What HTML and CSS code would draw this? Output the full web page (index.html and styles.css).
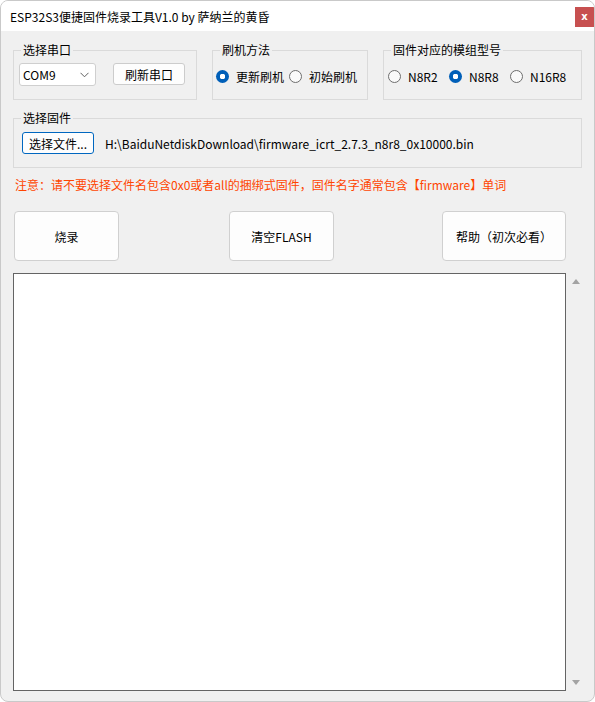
FILE: index.html
```html
<!DOCTYPE html>
<html lang="zh-CN">
<head>
<meta charset="utf-8">
<title>ESP32S3便捷固件烧录工具</title>
<link rel="stylesheet" href="styles.css">
</head>
<body>
<div class="window">
  <div class="titlebar">
    <span class="title">ESP32S3便捷固件烧录工具V1.0 by 萨纳兰的黄昏</span>
    <span class="close">x</span>
  </div>
  <div class="content">
    <div class="row-groups">
      <div class="group g-port">
        <span class="group-title">选择串口</span>
        <div class="group-body">
          <div class="combo">
            <span>COM9</span>
            <svg class="chev" width="9" height="6" viewBox="0 0 9 6"><polyline points="0.5,0.8 4.5,4.8 8.5,0.8" fill="none" stroke="#606060" stroke-width="1"/></svg>
          </div>
          <div class="btn btn-refresh">刷新串口</div>
        </div>
      </div>
      <div class="group g-method">
        <span class="group-title">刷机方法</span>
        <div class="group-body radios">
          <div class="radio w73"><span class="dot on"></span><span>更新刷机</span></div>
          <div class="radio w73"><span class="dot"></span><span>初始刷机</span></div>
        </div>
      </div>
      <div class="group g-model">
        <span class="group-title">固件对应的模组型号</span>
        <div class="group-body radios">
          <div class="radio w61"><span class="dot"></span><span>N8R2</span></div>
          <div class="radio w61"><span class="dot on"></span><span>N8R8</span></div>
          <div class="radio"><span class="dot"></span><span>N16R8</span></div>
        </div>
      </div>
    </div>

    <div class="group g-file">
      <span class="group-title">选择固件</span>
      <div class="group-body">
        <div class="btn btn-file">选择文件...</div>
        <span class="path">H:\BaiduNetdiskDownload\firmware_icrt_2.7.3_n8r8_0x10000.bin</span>
      </div>
    </div>

    <div class="warning">注意：请不要选择文件名包含0x0或者all的捆绑式固件，固件名字通常包含【firmware】单词</div>

    <div class="row-actions">
      <div class="btn big b-burn">烧录</div>
      <div class="btn big b-clear">清空FLASH</div>
      <div class="btn big b-help">帮助（初次必看）</div>
    </div>

    <div class="log-row">
      <div class="log"></div>
      <div class="scroll">
        <span class="arrow up"></span>
        <span class="arrow down"></span>
      </div>
    </div>
  </div>
</div>
</body>
</html>
```

FILE: styles.css
```css
html, body {
  margin: 0;
  padding: 0;
  background: #ffffff;
}

body {
  font-family: "Noto Sans CJK SC", "Noto Sans", sans-serif;
  font-size: 12px;
  color: #000;
}

.window {
  width: 595px;
  height: 702px;
  box-sizing: border-box;
  border: 1px solid #c9c9c9;
  border-radius: 8px;
  overflow: hidden;
  background: #f0f0f0;
  display: flex;
  flex-direction: column;
}

.titlebar {
  height: 30px;
  flex: none;
  background: #ffffff;
  display: flex;
  align-items: center;
  padding-left: 9px;
}

.title {
  flex: 1;
  font-size: 12px;
  line-height: 17px;
}

.close {
  align-self: flex-start;
  margin-top: 6px;
  width: 19px;
  height: 20px;
  background: #c75050;
  color: #fff;
  font-family: "DejaVu Sans", sans-serif;
  font-weight: bold;
  font-size: 10px;
  line-height: 19px;
  text-align: center;
}

.content {
  flex: 1;
  padding: 0 0 0 12px;
  display: flex;
  flex-direction: column;
}

/* group boxes */
.row-groups {
  display: flex;
  margin-top: 19px;
}

.group {
  position: relative;
  box-sizing: border-box;
  border: 1px solid #dadada;
  height: 50px;
}

.group-title {
  position: absolute;
  top: -10px;
  left: 7px;
  padding: 0 2px;
  background: #f0f0f0;
  line-height: 17px;
  white-space: nowrap;
}

.group-body {
  display: flex;
  align-items: center;
}

.g-port {
  width: 184px;
}
.g-port .group-body {
  padding: 12px 0 0 5px;
  align-items: flex-start;
}

.g-method {
  width: 156px;
  margin-left: 15px;
}
.g-method .group-body {
  padding: 15px 0 0 3px;
}

.g-model {
  width: 199px;
  margin-left: 15px;
}
.g-model .group-body {
  padding: 15px 0 0 4px;
}

.combo {
  box-sizing: border-box;
  width: 77px;
  height: 23px;
  background: #fff;
  border: 1px solid #cfcfcf;
  border-radius: 3px;
  display: flex;
  align-items: center;
  justify-content: space-between;
  padding: 0 6px 0 3px;
  line-height: 17px;
}

.btn {
  box-sizing: border-box;
  background: #fdfdfd;
  border: 1px solid #cccccc;
  border-radius: 3px;
  display: flex;
  align-items: center;
  justify-content: center;
  line-height: 17px;
  white-space: nowrap;
}

.btn-refresh {
  width: 72px;
  height: 22px;
  margin-left: 17px;
}

/* radios */
.radios {
  height: 20px;
}

.radio {
  display: flex;
  align-items: center;
  line-height: 17px;
  white-space: nowrap;
}
.w73 { width: 73px; }
.w61 { width: 61px; }

.dot {
  box-sizing: border-box;
  width: 13px;
  height: 13px;
  border-radius: 50%;
  border: 1px solid #6e6e6e;
  background: #fafafa;
  margin-right: 7px;
  flex: none;
}
.dot.on {
  border: none;
  background: radial-gradient(circle, #ffffff 0 2.6px, #005fb8 3px);
}

/* file group */
.g-file {
  width: 569px;
  margin-top: 18px;
}
.g-file .group-body {
  padding: 13px 0 0 8px;
}

.btn-file {
  width: 72px;
  height: 22px;
  border-color: #0067c0;
}

.path {
  margin-left: 11px;
  line-height: 17px;
  white-space: nowrap;
}

.warning {
  margin-top: 8px;
  padding-left: 2px;
  line-height: 17px;
  color: #ff4500;
  white-space: nowrap;
}

/* action buttons */
.row-actions {
  display: flex;
  margin-top: 18px;
  padding-left: 1px;
}

.big {
  height: 50px;
  border-color: #d0d0d0;
  border-radius: 4px;
}
.b-burn { width: 105px; }
.b-clear { width: 105px; margin-left: 110px; }
.b-help { width: 124px; margin-left: 108px; }

/* log area */
.log-row {
  display: flex;
  margin-top: 12px;
  height: 418px;
}

.log {
  box-sizing: border-box;
  width: 553px;
  height: 418px;
  background: #ffffff;
  border: 1px solid #646464;
}

.scroll {
  width: 20px;
  display: flex;
  flex-direction: column;
  justify-content: space-between;
  align-items: center;
  padding: 6px 0 6px 0;
  box-sizing: border-box;
}

.arrow {
  width: 0;
  height: 0;
  border-left: 4.5px solid transparent;
  border-right: 4.5px solid transparent;
}
.arrow.up {
  border-bottom: 5px solid #a3a3a3;
}
.arrow.down {
  border-top: 5px solid #a3a3a3;
}
```
